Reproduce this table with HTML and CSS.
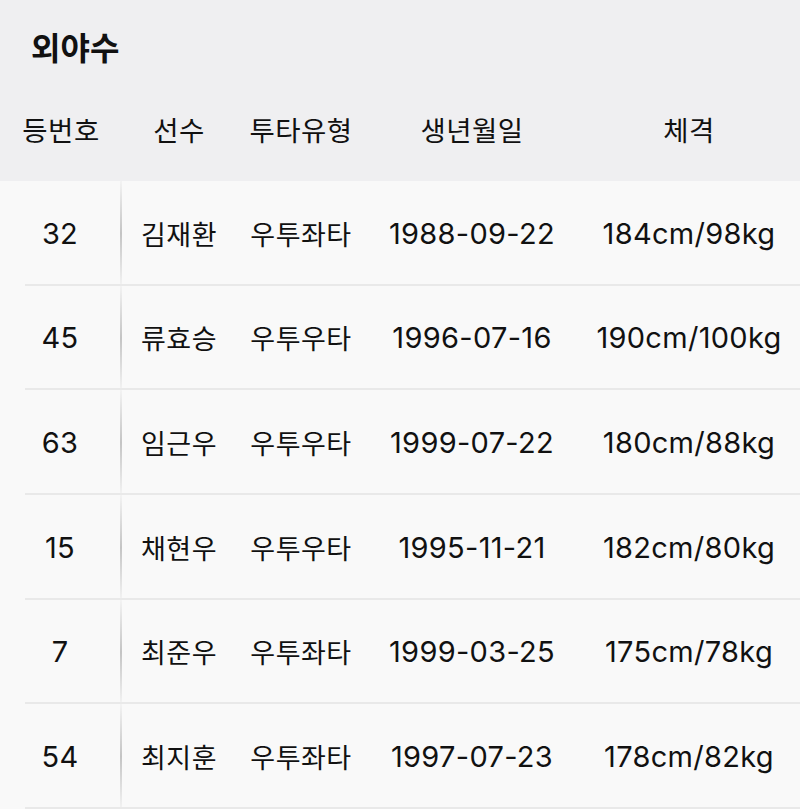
FILE: index.html
```html
<!DOCTYPE html>
<html lang="ko">
<head>
<meta charset="utf-8">
<link rel="stylesheet" href="styles.css">
</head>
<body>
<div class="page">
  <header class="top">
    <h1 class="title">외야수</h1>
    <div class="row head">
      <div class="c c1">등번호</div>
      <div class="c c2">선수</div>
      <div class="c c3">투타유형</div>
      <div class="c c4">생년월일</div>
      <div class="c c5">체격</div>
    </div>
  </header>
  <div class="body">
    <div class="row item"><div class="c c1">32</div><div class="c c2">김재환</div><div class="c c3">우투좌타</div><div class="c c4">1988-09-22</div><div class="c c5">184cm/98kg</div></div>
    <div class="row item"><div class="c c1">45</div><div class="c c2">류효승</div><div class="c c3">우투우타</div><div class="c c4">1996-07-16</div><div class="c c5">190cm/100kg</div></div>
    <div class="row item"><div class="c c1">63</div><div class="c c2">임근우</div><div class="c c3">우투우타</div><div class="c c4">1999-07-22</div><div class="c c5">180cm/88kg</div></div>
    <div class="row item"><div class="c c1">15</div><div class="c c2">채현우</div><div class="c c3">우투우타</div><div class="c c4">1995-11-21</div><div class="c c5">182cm/80kg</div></div>
    <div class="row item"><div class="c c1">7</div><div class="c c2">최준우</div><div class="c c3">우투좌타</div><div class="c c4">1999-03-25</div><div class="c c5">175cm/78kg</div></div>
    <div class="row item"><div class="c c1">54</div><div class="c c2">최지훈</div><div class="c c3">우투좌타</div><div class="c c4">1997-07-23</div><div class="c c5">178cm/82kg</div></div>
  </div>
</div>
</body>
</html>
```
FILE: styles.css
```css
html, body {
  margin: 0;
  padding: 0;
  background: #f9f9f9;
}
body {
  font-family: "Inter", "Noto Sans CJK KR", sans-serif;
  color: #111;
  width: 800px;
  height: 809px;
  overflow: hidden;
}
.top {
  background: #efeff1;
  height: 181px;
  display: flex;
  flex-direction: column;
}
.title {
  margin: 0;
  padding: 27px 0 0 31px;
  height: 76px;
  box-sizing: border-box;
  font-family: "Noto Sans CJK KR", sans-serif;
  font-size: 32px;
  font-weight: 700;
  line-height: 38px;
}
.row {
  display: grid;
  grid-template-columns: 122px 114px 130px 212px 222px;
}
.head {
  height: 105px;
  align-items: center;
  font-size: 27.5px;
  letter-spacing: 0.5px;
  padding-bottom: 0;
  box-sizing: border-box;
  font-family: "Noto Sans CJK KR", sans-serif;
}
.c {
  text-align: center;
  white-space: nowrap;
}
.item {
  height: 104.67px;
  align-items: center;
  font-size: 29px;
  letter-spacing: 0.3px;
  position: relative;
}
.item .c2, .item .c3 {
  font-family: "Noto Sans CJK KR", sans-serif;
  font-size: 27px;
  letter-spacing: 0.5px;
}
.item .c1 {
  align-self: stretch;
  display: flex;
  align-items: center;
  justify-content: center;
  border-right: 2px solid transparent;
  border-image: linear-gradient(to bottom, rgba(200,200,200,0.1), #c4c4c4 50%, rgba(200,200,200,0.1)) 1;
}
.item::after {
  content: "";
  position: absolute;
  left: 25px;
  right: 0;
  bottom: 0;
  height: 2px;
  background: #e9e9e9;
}
```
